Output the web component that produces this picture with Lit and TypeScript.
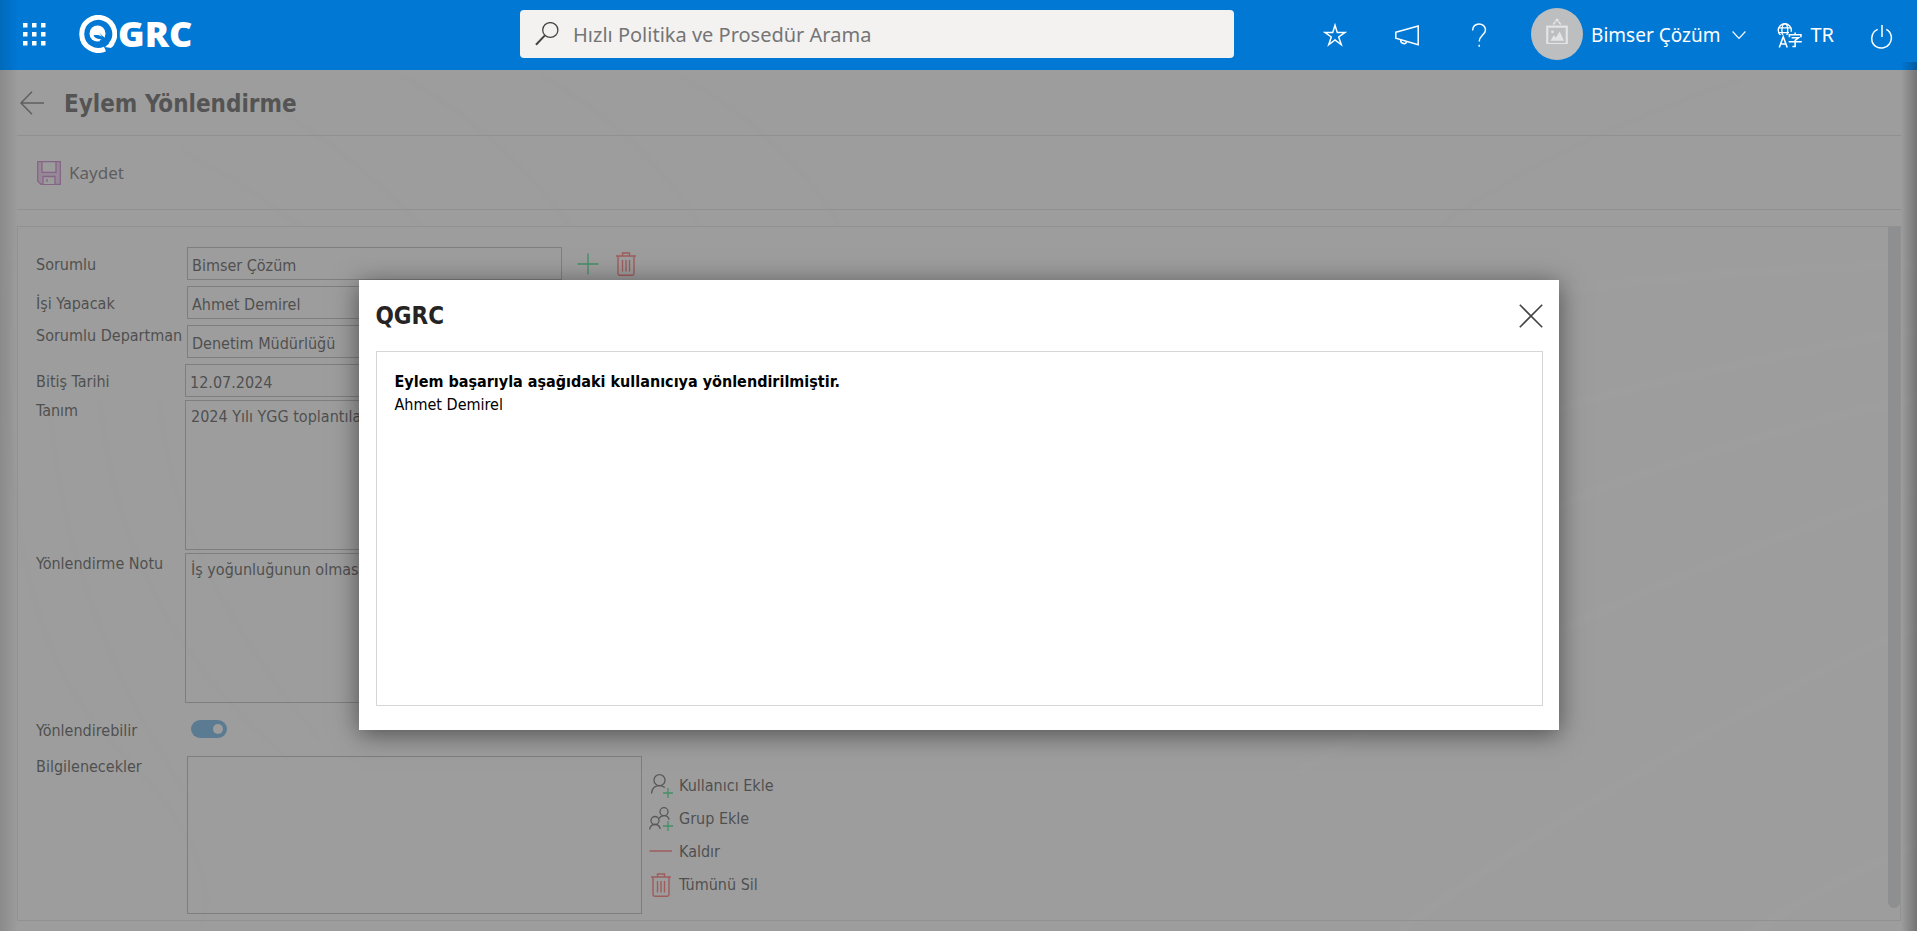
import { LitElement, html, css, svg } from "lit";
import { customElement, state } from "lit/decorators.js";

const icon = (size: number, body: unknown, cls = "") => html`
  <svg class="icon ${cls}" width=${size} height=${size} viewBox="0 0 24 24" aria-hidden="true">${body}</svg>`;

const waffle = svg`${[0, 1, 2].map((r) => [0, 1, 2].map((c) => svg`
  <rect x=${c * 9 + 1} y=${r * 9 + 1} width="4.5" height="4.5" fill="currentColor"></rect>`))}`;
const search = svg`<g fill="none" stroke="currentColor">
  <ellipse cx="15.3" cy="8" rx="7.6" ry="7.4" stroke-width="1.3"></ellipse>
  <path d="M9.9 13.4 1 22.7" stroke-width="2"></path></g>`;
const star = svg`<path fill="none" stroke="currentColor" stroke-width="1.5"
  d="M12 2.2 14.3 9.6H21.8L15.7 14 18.3 21.8 12 17 5.7 21.8 8.300 14 2.200 9.600H9.700Z"></path>`;
const megaphone = svg`<g fill="none" stroke="currentColor" stroke-width="1.5">
  <path d="M.8 9.3 23.2 3V21.8L.8 15.3Z"></path><path d="M5.6 16.8c0 4.8 6 4.8 6 1.6"></path></g>`;
const question = svg`<g fill="none" stroke="currentColor" stroke-width="1.5">
  <path d="M5.6 7.4C5.6 3.4 8.5.9 12 .9s6.500 2.500 6.500 6c0 4.800-6.300 5.700-6.300 11.600"></path>
  <path d="M12.200 21.800v2"></path></g>`;
const picture = svg`<g fill="none" stroke="currentColor">
  <circle cx="12" cy="2" r="1.500" fill="currentColor" stroke="none"></circle>
  <path d="M10.500 3.500 8.500 6M13.500 3.500 15.500 6" stroke-width="1.400"></path>
  <rect x="3" y="8" width="18" height="16" stroke-width="2"></rect></g>
  <path fill="currentColor" d="M6 21l3-5 2 2 3.500-5.500L18.500 21Z"></path>
  <circle cx="7.800" cy="12.800" r="1.300" fill="currentColor"></circle>`;
const chevron = svg`<path fill="none" stroke="currentColor" stroke-width="2" d="M1 6 12 18 23 6"></path>`;
const language = svg`<g fill="none" stroke="currentColor" stroke-width="1.300">
  <circle cx="7.500" cy="7" r="6.300"></circle><ellipse cx="7.500" cy="7" rx="2.800" ry="6.300"></ellipse>
  <path d="M1.800 4.700H13.200M1.800 9.300H13.200"></path></g>
  <path d="M0 11.500h24V24H0zM11.500 8.500h12.500v4H11.500z" fill="#0078d4"></path>
  <g fill="none" stroke="currentColor" stroke-width="1.500">
  <path d="M2.200 23.600 6 13.200 9.800 23.600M3.400 20.200H8.600"></path>
  <path d="M11.900 13.600V11.200H23V13.600M17.400 9V11.200M14 14.200H20.600L17.400 16.700V22.600H14.800M11.200 18H23.800"></path></g>`;
const power = svg`<g fill="none" stroke="currentColor" stroke-width="1.500">
  <path d="M12 0V12M7.700 4.400C.3 7.400-.2 18.500 6.500 21.800c4.500 2.300 10 1 12.700-2.600 4-5.400 2.200-12.200-2.900-14.800"></path></g>`;
const back = svg`<path fill="none" stroke="currentColor" stroke-width="1.500" d="M24 12H1.200M12 .8 1 12 12 23.200"></path>`;
const save = svg`<g fill="none" stroke="#c26fc2" stroke-width="1.300">
  <path d="M.7.700H23.300V23.300H4L.7 20Z" fill="#ecc8ec"></path>
  <path d="M5 .7H19V11.300H5Z" fill="#fafafa"></path>
  <path d="M6 23V15.500H18V23" fill="#fafafa"></path><path d="M10 18V21"></path></g>`;
const plus = svg`<path fill="none" stroke="#1fd873" stroke-width="1.500" d="M12 .5V23.500M.5 12H23.500"></path>`;
const trash = svg`<g fill="none" stroke="#ff5a5a" stroke-width="1.400">
  <path d="M2 4H22M8.500 4V1H15.500V4M4 4V21.500Q4 23.200 5.700 23.200H18.300Q20 23.200 20 21.500V4M8.500 8V19.500M12 8V19.500M15.500 8V19.500"></path></g>`;
const minus = svg`<path fill="none" stroke="#ff5a5a" stroke-width="1.500" d="M.5 11H23"></path>`;
const smallPlus = svg`<path fill="none" stroke="#1fd873" stroke-width="1.300" d="M19 14V24M14 19H24"></path>`;
const addUser = svg`<g fill="none" stroke="#505050" stroke-width="1.300">
  <circle cx="10.500" cy="6.200" r="5.500"></circle><path d="M2.500 19.500C3 14.500 6.300 11.700 10.500 11.700c2 0 3.800.7 5.300 1.900"></path></g>${smallPlus}`;
const addGroup = svg`<g fill="none" stroke="#505050" stroke-width="1.300">
  <circle cx="15" cy="4.700" r="4"></circle><circle cx="6" cy="13.500" r="4"></circle>
  <path d="M.7 22.500c.3-3.300 2.600-5 5.300-5s4.700 1.500 5.200 4.500M10 11.500c1.300-2 3-2.800 5-2.800 2.700 0 4.500 1.500 5.200 4"></path></g>${smallPlus}`;
const close = svg`<path fill="none" stroke="currentColor" stroke-width="1.600" d="M.8.800 23.200 23.200M23.200.8.800 23.200"></path>`;

@customElement("qgrc-header")
class QgrcHeader extends LitElement {
  static styles = css`
    :host { display: block; background: #0078d4; color: #fff; font-family: "Noto Sans", sans-serif; }
    .bar { display: grid; grid-template-columns: 520px minmax(200px, 714px) 1fr; align-items: center; height: 70px; }
    button { display: flex; align-items: center; padding: 0; border: 0; background: none; color: inherit; font: inherit; cursor: pointer; }
    .icon { display: block; flex: none; }
    .brand { display: flex; align-items: center; gap: 32px; padding: 0 0 2px 22px; }
    .logo { display: flex; align-items: center; gap: 1px; color: #fff; text-decoration: none;
      font-family: "Open Sans", sans-serif; font-size: 36px; font-weight: 800; line-height: 40px; }
    .search { display: flex; align-items: center; gap: 14px; height: 48px; margin-bottom: 2px; padding: 0 14px 0 15px;
      box-sizing: border-box; border-radius: 4px; background: #f3f2f1; color: #444; }
    .search input { flex: 1; min-width: 0; padding: 2px 0 0; border: 0; outline: 0; background: none; font: 20px/28px "Noto Sans", sans-serif; color: #333; }
    .search input::placeholder { color: #757575; opacity: 1; }
    .tools { display: flex; align-items: center; justify-content: flex-end; padding-right: 23px; }
    .tools > button { margin-left: 48px; }
    .tools .user { gap: 8px; margin-left: 40px; font-size: 19px; line-height: 28px; }
    .tools .language { gap: 8px; margin-left: 31px; font-size: 20px; line-height: 28px; }
    .tools .exit { margin: 4px 0 0 36px; }
    .avatar { display: grid; place-items: center; width: 52px; height: 52px; margin-bottom: 2px; border-radius: 50%; background: #bdbebf; color: #e3e4e5; }
    .avatar svg { margin-bottom: 6px; }
    .chevron { margin-left: 4px; }
  `;
  render() {
    return html`
      <header class="bar">
        <div class="brand">
          <button aria-label="Menü"><svg class="icon" width="25" height="25" viewBox="0 0 25 25">${waffle}</svg></button>
          <a class="logo" href="#">
            <svg class="icon" width="38" height="38" viewBox="0 0 38 38" aria-hidden="true">
              <path fill="none" stroke="#fff" stroke-width="5" d="M31.500 30A16.500 16.500 0 1 0 26 34"></path>
              <circle cx="18.500" cy="18.500" r="8" fill="#fff"></circle>
              <path d="M14.500 20.500C17 19.500 21 20 23.500 22L20 17.500 27 24 30 27.500 20.500 24C18 24 15.500 22.500 14.500 20.500Z" fill="#0078d4"></path>
              <path d="M20.500 25.500 30.500 35 33 32.500 24 24Z" fill="#0078d4"></path>
              <path d="M26 32 32 33 35.500 29.500 32 27Z" fill="#fff"></path>
            </svg><span>GRC</span></a>
        </div>
        <label class="search">${icon(24, search)}
          <input type="search" aria-label="Hızlı Politika ve Prosedür Arama" placeholder="Hızlı Politika ve Prosedür Arama" />
        </label>
        <nav class="tools">
          <button aria-label="Favoriler">${icon(24, star)}</button>
          <button aria-label="Duyurular">${icon(24, megaphone)}</button>
          <button aria-label="Yardım">${icon(24, question)}</button>
          <button class="user"><span class="avatar">${icon(26, picture)}</span>Bimser Çözüm ${icon(14, chevron, "chevron")}</button>
          <button class="language">${icon(25, language)}TR</button>
          <button class="exit" aria-label="Çıkış">${icon(24, power)}</button>
        </nav>
      </header>`;
  }
}

@customElement("action-form")
class ActionForm extends LitElement {
  @state() forwardable = true;
  static styles = css`
    :host { display: flex; flex-direction: column; color: #3a3a3a; font: 16px/20px "DejaVu Sans Condensed", "DejaVu Sans", sans-serif; font-stretch: condensed; }
    button { display: flex; align-items: center; padding: 0; border: 0; background: none; color: inherit; font: inherit; cursor: pointer; }
    .icon { display: block; flex: none; }
    .title { display: flex; align-items: center; gap: 20px; height: 65px; padding-left: 3px; border-bottom: 1px solid #dcdcdc; color: #606060; }
    h1 { margin: 0; padding-top: 2px; font-size: 24px; line-height: 32px; color: #484848; }
    .toolbar { display: flex; align-items: center; height: 73px; padding-left: 20px; border-bottom: 1px solid #dcdcdc; }
    .toolbar button { gap: 8px; font: 17px/24px "Noto Sans", sans-serif; color: #606060; }
    .panel { display: flex; justify-content: space-between; flex: 1; margin-top: 16px; border: 1px solid #dedede; }
    .scroll { width: 12px; margin-bottom: 12px; border-radius: 0 0 6px 6px; background: #d8dadf; }
    form { display: flex; flex-direction: column; padding: 20px 0 6px 18px; }
    .group { display: grid; grid-template-columns: 145px auto; column-gap: 6px; row-gap: 6px; align-items: center; }
    .notes { grid-template-columns: 143px auto; row-gap: 3px; margin-top: 3px; align-items: start; }
    .switch { height: 53px; }
    label { padding-top: 2px; white-space: nowrap; }
    .top { align-self: start; padding-top: 1px; }
    input[type="text"], textarea, .list { box-sizing: border-box; border: 1px solid #b0b0b0; border-radius: 0; background: transparent; color: inherit; font: inherit; outline: 0; }
    input[type="text"] { display: block; width: 375px; height: 33px; padding: 4px 4px 0; }
    input.date { width: 200px; margin-left: -2px; }
    textarea { display: block; width: 456px; height: 150px; padding: 6px 5px; resize: none; }
    .inline { display: flex; align-items: center; gap: 15px; }
    .list { width: 455px; height: 158px; margin: 0; padding: 4px; }
    .toggle { appearance: none; width: 36px; height: 18px; margin: 0 0 2px 4px; padding: 4px; border-radius: 9px; background: #57a9e0; display: flex; justify-content: flex-end; }
    .toggle::after { content: ""; width: 10px; height: 10px; border-radius: 50%; background: #fafafa; }
    .toggle:not(:checked) { justify-content: flex-start; background: #c8c8c8; }
    .people { display: flex; align-items: center; gap: 7px; }
    .actions { display: flex; flex-direction: column; gap: 9px; }
    .actions button { gap: 6px; height: 24px; }
  `;
  render() {
    return html`
      <div class="title"><button aria-label="Geri">${icon(24, back)}</button><h1>Eylem Yönlendirme</h1></div>
      <div class="toolbar"><button>${icon(24, save)}Kaydet</button></div>
      <section class="panel">
        <form>
          <div class="group">
            <label for="owner">Sorumlu</label>
            <div class="inline">
              <input id="owner" type="text" .value=${"Bimser Çözüm"} />
              <button type="button" aria-label="Sorumlu ekle">${icon(22, plus)}</button>
              <button type="button" aria-label="Sorumlu sil">${icon(24, trash)}</button>
            </div>
            <label for="worker">İşi Yapacak</label>
            <input id="worker" type="text" .value=${"Ahmet Demirel"} />
            <label for="department" class="top">Sorumlu Departman</label>
            <input id="department" type="text" .value=${"Denetim Müdürlüğü"} />
            <label for="due">Bitiş Tarihi</label>
            <input id="due" class="date" type="text" .value=${"12.07.2024"} />
          </div>
          <div class="group notes">
            <label for="description" class="top">Tanım</label>
            <textarea id="description" .value=${"2024 Yılı YGG toplantıları"}></textarea>
            <label for="note" class="top">Yönlendirme Notu</label>
            <textarea id="note" .value=${"İş yoğunluğunun olması"}></textarea>
          </div>
          <div class="group switch">
            <label for="forwardable">Yönlendirebilir</label>
            <input id="forwardable" class="toggle" type="checkbox" role="switch" .checked=${this.forwardable}
              @change=${(e: Event) => { this.forwardable = (e.target as HTMLInputElement).checked; }} />
          </div>
          <div class="group">
            <label for="informed" class="top">Bilgilenecekler</label>
            <div class="people">
              <select id="informed" class="list" size="6" multiple></select>
              <div class="actions">
                <button type="button">${icon(24, addUser)}Kullanıcı Ekle</button>
                <button type="button">${icon(24, addGroup)}Grup Ekle</button>
                <button type="button">${icon(24, minus)}Kaldır</button>
                <button type="button">${icon(24, trash)}Tümünü Sil</button>
              </div>
            </div>
          </div>
        </form>
        <div class="scroll"></div>
      </section>`;
  }
}

@customElement("message-dialog")
class MessageDialog extends LitElement {
  static styles = css`
    :host { display: block; box-sizing: border-box; width: 1200px; max-width: 90%; padding: 16px 16px 24px 17px; background: #fff;
      box-shadow: 0 4px 24px rgba(0, 0, 0, 0.5); font: 16px/23px "DejaVu Sans Condensed", "DejaVu Sans", sans-serif; font-stretch: condensed; color: #000; }
    .head { display: flex; align-items: center; justify-content: space-between; height: 39px; margin-bottom: 16px; }
    h2 { margin: 0; font-size: 24px; line-height: 32px; color: #252423; }
    button { padding: 0; border: 0; background: none; color: #444; cursor: pointer; }
    .icon { display: block; }
    .body { min-height: 355px; box-sizing: border-box; padding: 18px; border: 1px solid #d6d6d6; }
    p { margin: 0; }
  `;
  render() {
    return html`
      <div class="head"><h2 id="heading">QGRC</h2><button aria-label="Kapat">${icon(24, close)}</button></div>
      <div class="body"><p><strong>Eylem başarıyla aşağıdaki kullanıcıya yönlendirilmiştir.</strong></p><p>Ahmet Demirel</p></div>`;
  }
}

@customElement("app-root")
class AppRoot extends LitElement {
  static styles = css`
    :host { display: flex; flex-direction: column; min-height: 100vh; position: relative; background: #fdfdfd; }
    .page { position: relative; display: flex; flex: 1; }
    .waves { position: absolute; inset: 0; width: 100%; height: 100%; }
    action-form { position: relative; flex: 1; margin: 0 16px 10px 17px; }
    .overlay { position: absolute; inset: 0; display: flex; justify-content: center; align-items: flex-start;
      padding-top: 210px; background: rgba(94, 94, 94, 0.6); }
    .edge { position: absolute; bottom: 0; pointer-events: none; }
    .left { left: 0; top: 0; width: 18px; background: linear-gradient(to right, rgba(0, 0, 0, 0.12), transparent); }
    .right { right: 0; top: 62px; width: 16px; background: linear-gradient(to left, rgba(0, 0, 0, 0.26), transparent); }
  `;
  render() {
    return html`
      <qgrc-header></qgrc-header>
      <main class="page">
        <svg class="waves" viewBox="0 70 1917 861" preserveAspectRatio="none" aria-hidden="true">
          <g fill="none" stroke="#fff" stroke-width="8">
            <path d="M1380 460Q1650 375 1917 330M1380 580Q1650 455 1917 398M1300 770Q1600 590 1917 490M1400 930Q1650 750 1917 625M1740 940Q1830 880 1917 845M1450 310Q1650 270 1917 265"></path>
          </g>
          <g fill="none" stroke="#fafafa" stroke-width="6">
            <path d="M10 260Q-10 620 110 740T200 931M50 400Q60 600 190 800M100 400Q120 620 290 760M160 400Q170 560 320 740M180 150Q240 180 300 226M280 110Q360 160 420 226M400 75Q500 130 570 226M540 75Q640 130 700 226M680 75Q790 140 840 226M1440 226Q1560 140 1740 80"></path>
          </g>
        </svg>
        <action-form></action-form>
        <div class="overlay"><message-dialog role="dialog" aria-modal="true" aria-label="QGRC"></message-dialog></div>
      </main>
      <div class="edge left"></div>
      <div class="edge right"></div>`;
  }
}
